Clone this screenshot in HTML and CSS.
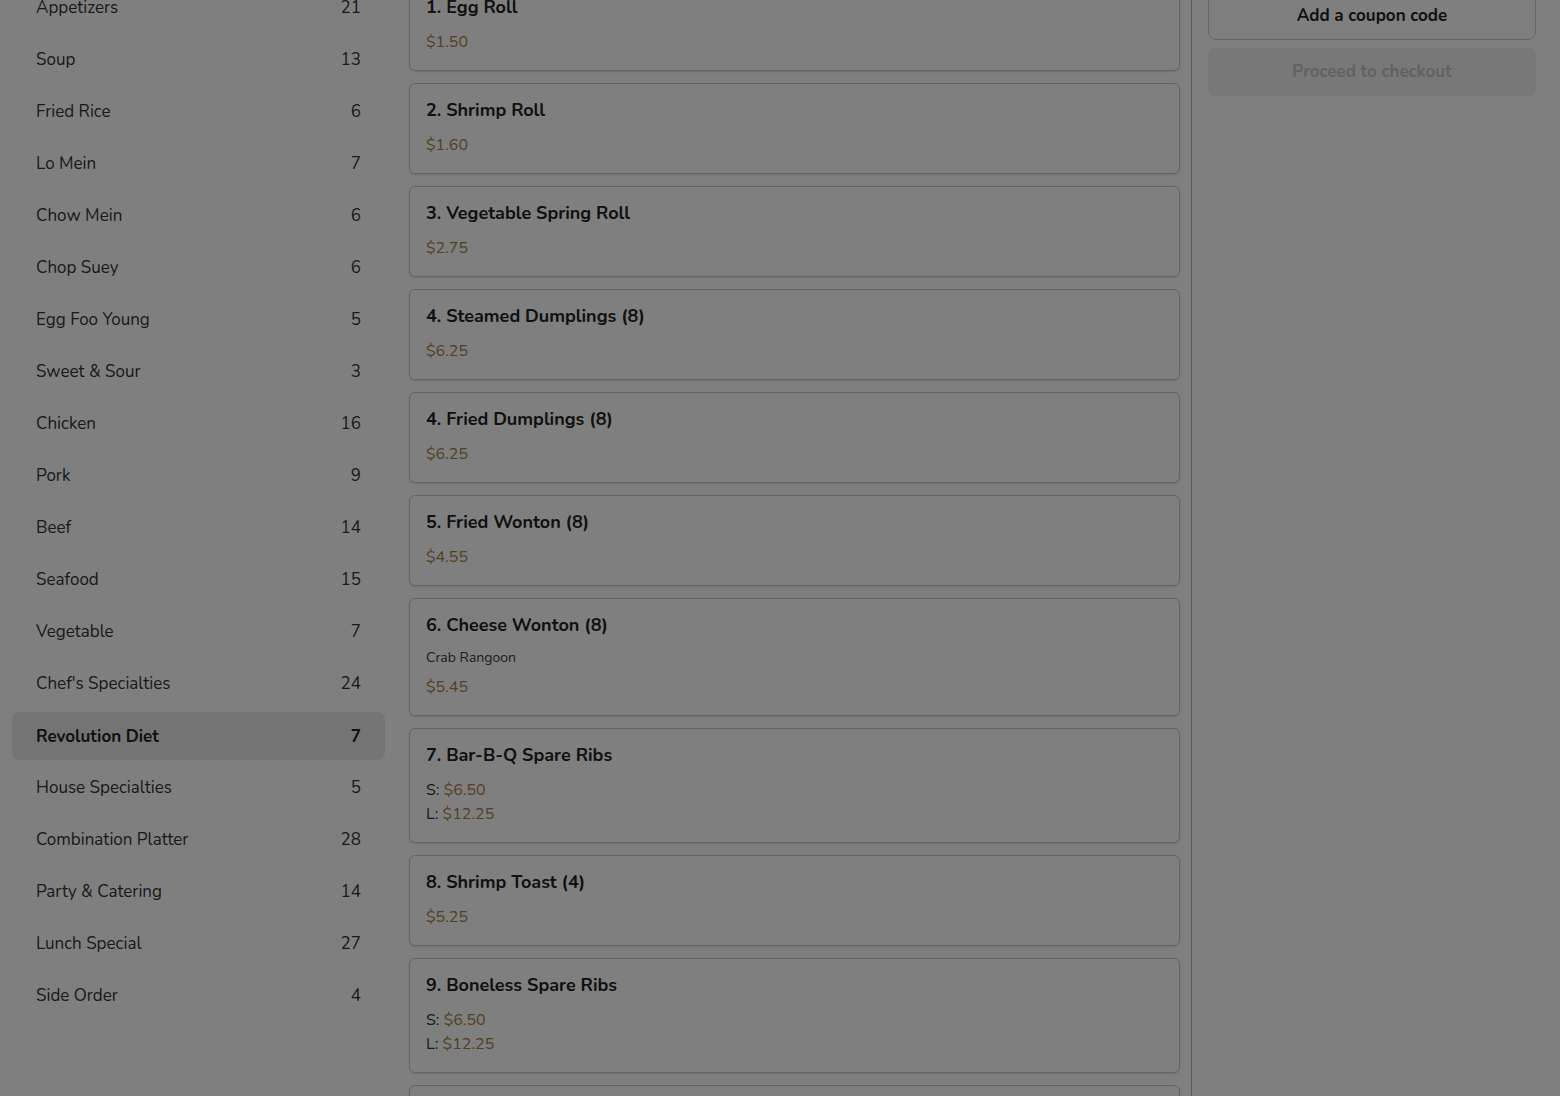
FILE: index.html
```html
<!DOCTYPE html>
<html lang="en">
<head>
<meta charset="utf-8">
<title>Menu</title>
<link rel="stylesheet" href="styles.css">
</head>
<body>
<div class="page">
  <aside class="categories">
    <ul class="cat-list">
      <li class="cat"><span>Appetizers</span><span>21</span></li>
      <li class="cat"><span>Soup</span><span>13</span></li>
      <li class="cat"><span>Fried Rice</span><span>6</span></li>
      <li class="cat"><span>Lo Mein</span><span>7</span></li>
      <li class="cat"><span>Chow Mein</span><span>6</span></li>
      <li class="cat"><span>Chop Suey</span><span>6</span></li>
      <li class="cat"><span>Egg Foo Young</span><span>5</span></li>
      <li class="cat"><span>Sweet &amp; Sour</span><span>3</span></li>
      <li class="cat"><span>Chicken</span><span>16</span></li>
      <li class="cat"><span>Pork</span><span>9</span></li>
      <li class="cat"><span>Beef</span><span>14</span></li>
      <li class="cat"><span>Seafood</span><span>15</span></li>
      <li class="cat"><span>Vegetable</span><span>7</span></li>
      <li class="cat"><span>Chef's Specialties</span><span>24</span></li>
      <li class="cat active"><span>Revolution Diet</span><span>7</span></li>
      <li class="cat"><span>House Specialties</span><span>5</span></li>
      <li class="cat"><span>Combination Platter</span><span>28</span></li>
      <li class="cat"><span>Party &amp; Catering</span><span>14</span></li>
      <li class="cat"><span>Lunch Special</span><span>27</span></li>
      <li class="cat"><span>Side Order</span><span>4</span></li>
    </ul>
  </aside>

  <main class="menu">
    <div class="item"><h3 class="item-title">1. Egg Roll</h3><div class="price">$1.50</div></div>
    <div class="item"><h3 class="item-title">2. Shrimp Roll</h3><div class="price">$1.60</div></div>
    <div class="item"><h3 class="item-title">3. Vegetable Spring Roll</h3><div class="price">$2.75</div></div>
    <div class="item"><h3 class="item-title">4. Steamed Dumplings (8)</h3><div class="price">$6.25</div></div>
    <div class="item"><h3 class="item-title">4. Fried Dumplings (8)</h3><div class="price">$6.25</div></div>
    <div class="item"><h3 class="item-title">5. Fried Wonton (8)</h3><div class="price">$4.55</div></div>
    <div class="item"><h3 class="item-title">6. Cheese Wonton (8)</h3><p class="desc">Crab Rangoon</p><div class="price">$5.45</div></div>
    <div class="item"><h3 class="item-title">7. Bar-B-Q Spare Ribs</h3><div class="sizes"><div class="size">S: <span class="amt">$6.50</span></div><div class="size">L: <span class="amt">$12.25</span></div></div></div>
    <div class="item"><h3 class="item-title">8. Shrimp Toast (4)</h3><div class="price">$5.25</div></div>
    <div class="item"><h3 class="item-title">9. Boneless Spare Ribs</h3><div class="sizes"><div class="size">S: <span class="amt">$6.50</span></div><div class="size">L: <span class="amt">$12.25</span></div></div></div>
    <div class="item"><h3 class="item-title">10. Chicken Wings (6)</h3><div class="price">$6.95</div></div>
  </main>

  <aside class="cart">
    <button class="btn coupon">Add a coupon code</button>
    <button class="btn checkout" disabled>Proceed to checkout</button>
  </aside>
</div>
<div class="overlay"></div>
</body>
</html>
```

FILE: styles.css
```css
* { box-sizing: border-box; }
html, body { margin: 0; padding: 0; }
body {
  background: #fff;
  font-family: "Nunito", "Lato", "Noto Sans", sans-serif;
  color: #2e2e2e;
  overflow: hidden;
}
.page {
  display: grid;
  grid-template-columns: 397px 795px 368px;
  margin-top: -20px;
  align-items: start;
}
.categories { padding: 4px 12px 12px; }
.cat-list { list-style: none; margin: 0; padding: 0; display: flex; flex-direction: column; gap: 4px; }
.cat {
  height: 48px;
  display: flex;
  align-items: center;
  justify-content: space-between;
  padding: 0 24px 1px;
  font-size: 17px;
  color: #333;
  border-radius: 8px;
}
.cat.active { background: #e9e9e9; font-weight: 700; color: #222; padding-bottom: 0; }

.menu {
  padding: 0 11px 0 12px;
  border-right: 1px solid #b5b5b5;
  display: flex;
  flex-direction: column;
  gap: 12px;
  min-height: 1200px;
}
.item {
  border: 1px solid #c9c9c9;
  border-radius: 6px;
  padding: 15px 16px 16px;
  box-shadow: 0 1px 2px rgba(0,0,0,0.12);
  display: flex;
  flex-direction: column;
}
.item-title {
  margin: 0 0 11px;
  font-size: 18px;
  line-height: 23px;
  font-weight: 700;
  color: #222;
}
.price, .size { font-size: 16px; line-height: 24px; }
.price, .amt { color: #a97f45; }
.size { color: #333; }
.desc { margin: 0 0 7px; font-size: 14px; line-height: 20px; color: #3a3a3a; }

.cart {
  padding: 0 24px 0 16px;
  display: flex;
  flex-direction: column;
  gap: 8px;
  margin-top: 12px;
}
.btn {
  height: 48px;
  border-radius: 8px;
  font-family: inherit;
  font-size: 17px;
  font-weight: 700;
  width: 100%;
  padding: 0 0 2px;
}
.coupon { background: #fff; border: 1px solid #cccccc; color: #222; }
.checkout { background: #f1f1f1; border: none; color: #c4c4c4; }

.overlay {
  position: fixed;
  inset: 0;
  background: rgba(0,0,0,0.5);
}
```
